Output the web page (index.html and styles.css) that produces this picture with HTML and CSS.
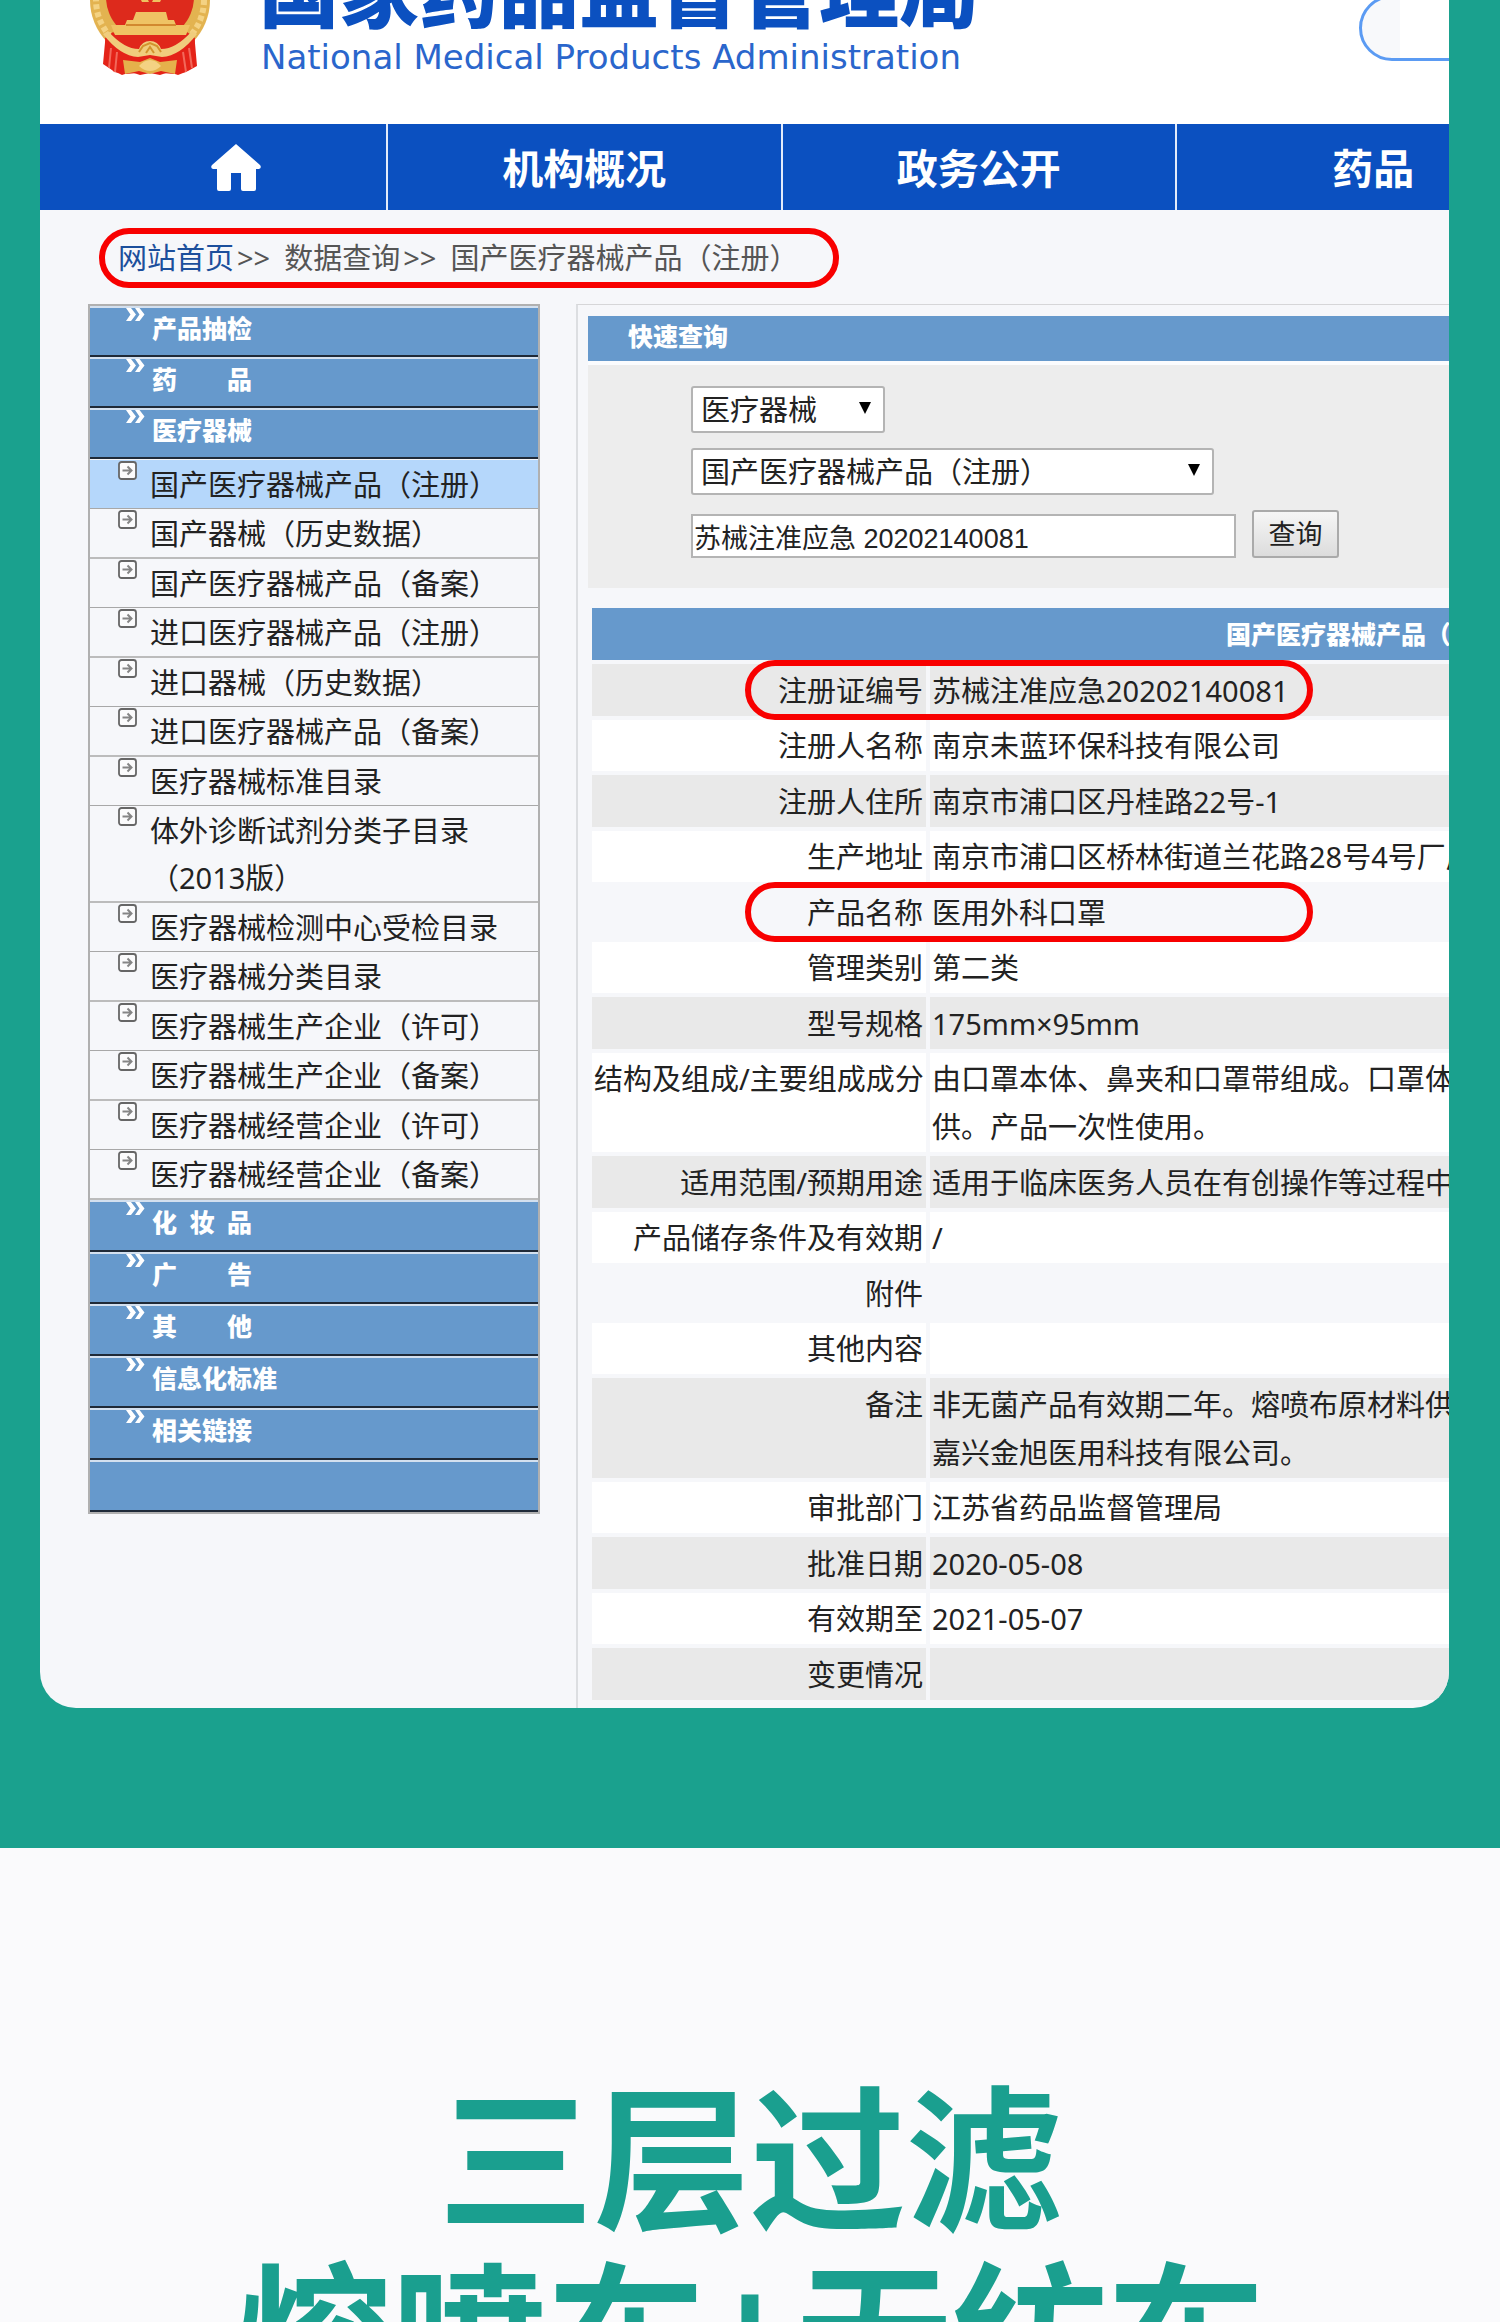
FILE: index.html
```html
<!DOCTYPE html>
<html lang="zh-CN">
<head>
    <meta charset="UTF-8">
    <meta name="viewport" content="width=device-width, initial-scale=1.0">
    <title>国产医疗器械产品（注册）</title>
    <link rel="stylesheet" href="styles.css">
</head>
<body>
    <svg class="defs" aria-hidden="true">
        <symbol id="icon-raquo" viewBox="0 0 19 13">
            <path d="M0 0h5l5 6.500-5 6.500h-5l4.500-6.500z M9 0h4.500l5 6.500-5 6.500h-4.500l4.500-6.500z" fill="#fff"/>
        </symbol>
        <symbol id="icon-item" viewBox="0 0 19 19">
            <rect x="1" y="1" width="17" height="17" rx="2.500" fill="#fbfbfc" stroke="#666" stroke-width="1.800"/>
            <path d="M4.500 9.500h9M9.500 5.500l4 4-4 4" fill="none" stroke="#858585" stroke-width="2"/>
        </symbol>
    </svg>

    <section class="certificate">
        <div class="card">
            <header class="header">
                <svg class="emblem" viewBox="0 0 122 122" aria-hidden="true">
                    <path d="M17 78l-3 32 9 6 10 5 9-3 9 3 10-2 10 2 9-3 9 3 10-4 9-5-3-34z" fill="#e42318"/>
                    <circle cx="61" cy="46" r="60" fill="#e3b350"/>
                    <circle cx="61" cy="46" r="54" fill="none" stroke="#f4d283" stroke-width="6" stroke-dasharray="5 3"/>
                    <path d="M16 84l8-6 20 18 17 5 17-5 20-18 8 6-2 26-7 8-12 2-24-2-24 2-12-2-7-8z" fill="#e42318"/>
                    <circle cx="61" cy="43" r="44" fill="#dd2a1c"/>
                    <path d="M50 42h7l3 6h3l3-6h8l-3 6H53z" fill="#efc15f"/>
                    <path d="M47 58h30l2 8h6l2 5h14l-4 10H26l-4-10h14l2-5h6z" fill="#efc364"/>
                    <path d="M37 71h50" stroke="#d2892f" stroke-width="2"/>
                    <path d="M24 81h74l-14 15-13 5H51l-13-5z" fill="#e0271b"/>
                    <path d="M14 80q17 22 35 23l12-2 12 2q18-1 35-23l-5-3q-16 18-31 18-3-8-11-8t-11 8q-15 0-31-18z" fill="#f0cd7d"/>
                    <path d="M50 98l4-6 7-3 7 3 4 6M57 99l4-6 4 6" stroke="#d2932e" stroke-width="2" fill="none"/>
                    <path d="M34 106l17 2 10-4 10 4 17-2-2 14-14-3-11 3-11-3-14 3z" fill="#e5b14b"/>
                    <path d="M50 112q5-6 11-6t11 6q-5 5-11 5t-11-5z" fill="#f4d283"/>
                    <path d="M22 94l-2 20M28 98l-2 20M100 94l3 20M94 98l3 20" stroke="#f2685a" stroke-width="2" fill="none"/>
                </svg>
                <div class="brand">
                    <h1 class="brand-name">国家药品监督管理局</h1>
                    <p class="brand-en">National Medical Products Administration</p>
                </div>
                <input class="site-search" type="search" aria-label="站内搜索">
            </header>

            <nav class="nav">
                <a class="nav-item nav-home" href="#" aria-label="首页">
                    <svg viewBox="0 0 50 49" aria-hidden="true">
                        <path d="M25 1L49 22q2 3-1 4h-3v20q0 2-2 2H32q-2 0-2-2V30H20v16q0 2-2 2H8q-2 0-2-2V26H2q-3-1-1-4z" fill="#fff"/>
                    </svg>
                </a>
                <a class="nav-item" href="#">机构概况</a>
                <a class="nav-item" href="#">政务公开</a>
                <a class="nav-item" href="#">药品</a>
            </nav>

            <div class="breadcrumb">
                <a href="#">网站首页</a><span class="sep">&gt;&gt;</span><span>数据查询</span><span class="sep">&gt;&gt;</span><span>国产医疗器械产品（注册）</span>
            </div>

            <div class="main">
                <aside class="sidebar">
                    <a class="menu-title" href="#"><svg><use href="#icon-raquo"/></svg>产品抽检</a>
                    <a class="menu-title" href="#"><svg><use href="#icon-raquo"/></svg>药　　品</a>
                    <a class="menu-title" href="#"><svg><use href="#icon-raquo"/></svg>医疗器械</a>
                    <ul class="menu-list">
                        <li class="active"><svg><use href="#icon-item"/></svg><a href="#">国产医疗器械产品（注册）</a></li>
                        <li><svg><use href="#icon-item"/></svg><a href="#">国产器械（历史数据）</a></li>
                        <li><svg><use href="#icon-item"/></svg><a href="#">国产医疗器械产品（备案）</a></li>
                        <li><svg><use href="#icon-item"/></svg><a href="#">进口医疗器械产品（注册）</a></li>
                        <li><svg><use href="#icon-item"/></svg><a href="#">进口器械（历史数据）</a></li>
                        <li><svg><use href="#icon-item"/></svg><a href="#">进口医疗器械产品（备案）</a></li>
                        <li><svg><use href="#icon-item"/></svg><a href="#">医疗器械标准目录</a></li>
                        <li><svg><use href="#icon-item"/></svg><a href="#">体外诊断试剂分类子目录<br>（2013版）</a></li>
                        <li><svg><use href="#icon-item"/></svg><a href="#">医疗器械检测中心受检目录</a></li>
                        <li><svg><use href="#icon-item"/></svg><a href="#">医疗器械分类目录</a></li>
                        <li><svg><use href="#icon-item"/></svg><a href="#">医疗器械生产企业（许可）</a></li>
                        <li><svg><use href="#icon-item"/></svg><a href="#">医疗器械生产企业（备案）</a></li>
                        <li><svg><use href="#icon-item"/></svg><a href="#">医疗器械经营企业（许可）</a></li>
                        <li><svg><use href="#icon-item"/></svg><a href="#">医疗器械经营企业（备案）</a></li>
                    </ul>
                    <a class="menu-title" href="#"><svg><use href="#icon-raquo"/></svg>化&ensp;妆&ensp;品</a>
                    <a class="menu-title" href="#"><svg><use href="#icon-raquo"/></svg>广　　告</a>
                    <a class="menu-title" href="#"><svg><use href="#icon-raquo"/></svg>其　　他</a>
                    <a class="menu-title" href="#"><svg><use href="#icon-raquo"/></svg>信息化标准</a>
                    <a class="menu-title" href="#"><svg><use href="#icon-raquo"/></svg>相关链接</a>
                    <div class="menu-title"></div>
                </aside>

                <div class="content">
                    <h2 class="bar">快速查询</h2>
                    <form class="query">
                        <div class="select-box select-small">
                            <select aria-label="类别"><option>医疗器械</option></select>
                        </div>
                        <div class="select-box select-large">
                            <select aria-label="数据库"><option>国产医疗器械产品（注册）</option></select>
                        </div>
                        <div class="query-row">
                            <input type="text" aria-label="关键字" value="苏械注准应急 20202140081">
                            <button type="button">查询</button>
                        </div>
                    </form>

                    <table class="detail">
                        <colgroup><col class="col-label"><col></colgroup>
                        <thead>
                            <tr><th colspan="2">国产医疗器械产品（</th></tr>
                        </thead>
                        <tbody>
                            <tr class="marked"><th>注册证编号</th><td>苏械注准应急20202140081</td></tr>
                            <tr><th>注册人名称</th><td>南京未蓝环保科技有限公司</td></tr>
                            <tr><th>注册人住所</th><td>南京市浦口区丹桂路22号-1</td></tr>
                            <tr><th>生产地址</th><td>南京市浦口区桥林街道兰花路28号4号厂房</td></tr>
                            <tr class="marked plain"><th>产品名称</th><td>医用外科口罩</td></tr>
                            <tr><th>管理类别</th><td>第二类</td></tr>
                            <tr><th>型号规格</th><td>175mm×95mm</td></tr>
                            <tr><th>结构及组成/主要组成成分</th><td>由口罩本体、鼻夹和口罩带组成。口罩体<br>供。产品一次性使用。</td></tr>
                            <tr><th>适用范围/预期用途</th><td>适用于临床医务人员在有创操作等过程中</td></tr>
                            <tr><th>产品储存条件及有效期</th><td>/</td></tr>
                            <tr class="plain"><th>附件</th><td></td></tr>
                            <tr><th>其他内容</th><td></td></tr>
                            <tr><th>备注</th><td>非无菌产品有效期二年。熔喷布原材料供<br>嘉兴金旭医用科技有限公司。</td></tr>
                            <tr><th>审批部门</th><td>江苏省药品监督管理局</td></tr>
                            <tr><th>批准日期</th><td>2020-05-08</td></tr>
                            <tr><th>有效期至</th><td>2021-05-07</td></tr>
                            <tr><th>变更情况</th><td></td></tr>
                        </tbody>
                    </table>
                </div>
            </div>
        </div>
    </section>

    <section class="feature">
        <h2>三层过滤<br>熔喷布+无纺布</h2>
    </section>
</body>
</html>
```
FILE: styles.css
```css
*, *::after {
    box-sizing: border-box;
}
body {
    margin: 0;
    height: 100vh;
    overflow: hidden;
    font-family: "Noto Sans", "Noto Sans CJK SC", sans-serif;
    font-size: 29px;
    color: #222;
    background: #fafafc;
}
h1, h2, p, ul {
    margin: 0;
    padding: 0;
}
a {
    color: inherit;
    text-decoration: none;
}
.defs {
    display: none;
}
.certificate {
    padding: 0 51px 140px 40px;
    background: #1aa18e;
}
.card {
    overflow: hidden;
    border-radius: 0 0 36px 36px;
    background: #f6f7fa;
}

/* header */
.header {
    display: flex;
    align-items: flex-start;
    height: 124px;
    padding-left: 49px;
    background: #fff;
    overflow: hidden;
}
.emblem {
    flex: none;
    width: 122px;
    height: 122px;
    margin-top: -46px;
}
.brand {
    flex: none;
    margin: -54px 0 0 48px;
    color: #0b50c0;
    white-space: nowrap;
}
.brand-name {
    font-family: "Noto Sans CJK SC", sans-serif;
    font-size: 80px;
    font-weight: 900;
    line-height: 80px;
}
.brand-en {
    padding: 11px 0 0 2px;
    font-family: "DejaVu Sans", sans-serif;
    font-size: 34px;
    line-height: 40px;
    color: #2a66cc;
}
.site-search {
    flex: none;
    width: 400px;
    height: 66px;
    margin: -5px -310px 0 auto;
    border: 3px solid #5b9bf3;
    border-radius: 33px;
    background: linear-gradient(to right, #f8f9fb 38px, #fff 38px);
}

/* navigation */
.nav {
    display: flex;
    height: 86px;
    overflow: hidden;
    background: #0b50c0;
}
.nav-item {
    flex: none;
    display: flex;
    align-items: center;
    justify-content: center;
    width: 28%;
    padding-bottom: 2px;
    border-right: 2px solid #e3ebfa;
    color: #fff;
    font-family: "Noto Sans CJK SC", sans-serif;
    font-size: 41px;
    font-weight: 700;
}
.nav-home {
    width: 348px;
    padding: 0 0 0 46px;
}
.nav-home svg {
    width: 50px;
    height: 49px;
}

.breadcrumb {
    width: 740px;
    margin: 18px 0 16px 59px;
    padding-left: 13px;
    border: 6px solid #f80000;
    border-radius: 30px;
    line-height: 48px;
    color: #555;
    white-space: nowrap;
}
.breadcrumb a {
    color: #1c4f9c;
}
.sep {
    padding: 0 14px 0 3px;
}

.main {
    display: flex;
    gap: 36px;
    padding-left: 48px;
}

/* left menu */
.sidebar {
    flex: none;
    align-self: flex-start;
    width: 452px;
    border: 2px solid #b0b0b0;
}
.menu-title {
    display: flex;
    align-items: flex-start;
    gap: 7px;
    height: 51px;
    padding-left: 36px;
    border-top: 2px solid #d3e0ef;
    border-bottom: 2px solid #1f2a38;
    background: #6699cc;
    color: #fff;
    font-family: "Noto Sans CJK SC", sans-serif;
    font-size: 25px;
    font-weight: 900;
    line-height: 38px;
}
.menu-title svg {
    width: 19px;
    height: 13px;
}
.menu-list {
    padding-top: 1px;
    list-style: none;
}
.menu-list ~ .menu-title {
    height: 52px;
}
.menu-list li {
    display: flex;
    align-items: flex-start;
    gap: 13px;
    padding: 1px 0 0 28px;
    border-bottom: 1px solid #a8a8a8;
    line-height: 47px;
}
.menu-list li:nth-child(even) {
    border-bottom: 2px solid #bcbcbc;
}
.menu-list .active {
    background: #b5d7fb;
}
.menu-list svg {
    flex: none;
    width: 19px;
    height: 19px;
}

/* query and result */
.content {
    flex: 1;
    min-width: 0;
    padding: 11px 0 4px 10px;
    border-top: 1px solid #d6d6d8;
    border-left: 2px solid #dcdee1;
}
.bar {
    height: 49px;
    padding-left: 40px;
    border-bottom: 4px solid #fbfcfe;
    background: #6699cc;
    color: #fff;
    font-family: "Noto Sans CJK SC", sans-serif;
    font-size: 25px;
    font-weight: 900;
    line-height: 38px;
}
.query {
    display: flex;
    flex-direction: column;
    gap: 15px;
    padding: 21px 0 30px 103px;
    background: #ededed;
}
.select-box {
    position: relative;
}
.select-box::after {
    content: "";
    position: absolute;
    top: 16px;
    right: 14px;
    width: 12px;
    height: 12px;
    background: #000;
    clip-path: polygon(0 0, 100% 0, 50% 100%);
    pointer-events: none;
}
.select-small {
    width: 194px;
}
.select-large {
    width: 523px;
}
.query select, .query input, .query button {
    border: 2px solid #b4b4b4;
    border-radius: 3px;
    background: #fff;
    color: #222;
    font-family: "Noto Sans", "Noto Sans CJK SC", sans-serif;
    font-size: 29px;
}
.query select {
    display: block;
    appearance: none;
    width: 100%;
    height: 47px;
    padding: 0 8px;
}
.query-row {
    display: flex;
    align-items: flex-end;
    gap: 16px;
}
.query input {
    width: 545px;
    height: 44px;
    padding: 0 1px;
    border-radius: 0;
    font-family: "Liberation Sans", "Noto Sans CJK SC", sans-serif;
    font-size: 27px;
}
.query button {
    width: 87px;
    height: 48px;
    padding: 0;
    border-color: #aaa;
    background: linear-gradient(#f6f6f6, #dcdcdc);
    font-size: 27px;
    line-height: 40px;
}
.detail {
    width: calc(100% + 6px);
    margin-top: 16px;
    table-layout: fixed;
    border-collapse: separate;
    border-spacing: 4px;
    line-height: 48px;
    white-space: nowrap;
}
.col-label {
    width: 334px;
}
.detail th, .detail td {
    height: 52px;
    padding: 3px 2px 1px;
    background: #e9e9e9;
    text-align: left;
    vertical-align: top;
    font-weight: 400;
}
.detail tbody th {
    padding-right: 3px;
    text-align: right;
}
.detail thead th {
    padding: 3px 0;
    background: #6699cc;
    color: #fff;
    font-family: "Noto Sans CJK SC", sans-serif;
    font-size: 25px;
    font-weight: 900;
    line-height: 44px;
    text-align: right;
}
.detail tbody tr:nth-child(even) > * {
    height: 51px;
    padding-top: 2px;
    background: #fff;
}
.detail tbody .plain > * {
    background: #f6f7fa;
}
.marked th {
    position: relative;
}
.marked th::after {
    content: "";
    position: absolute;
    top: -4px;
    left: 153px;
    width: 568px;
    height: 60px;
    border: 6px solid #f80000;
    border-radius: 30px;
    pointer-events: none;
}

.feature {
    padding-top: 214px;
}
.feature h2 {
    color: #1a9f8f;
    font-family: "Noto Sans CJK SC", sans-serif;
    font-size: 156px;
    font-weight: 700;
    line-height: 176px;
    text-align: center;
}
```
